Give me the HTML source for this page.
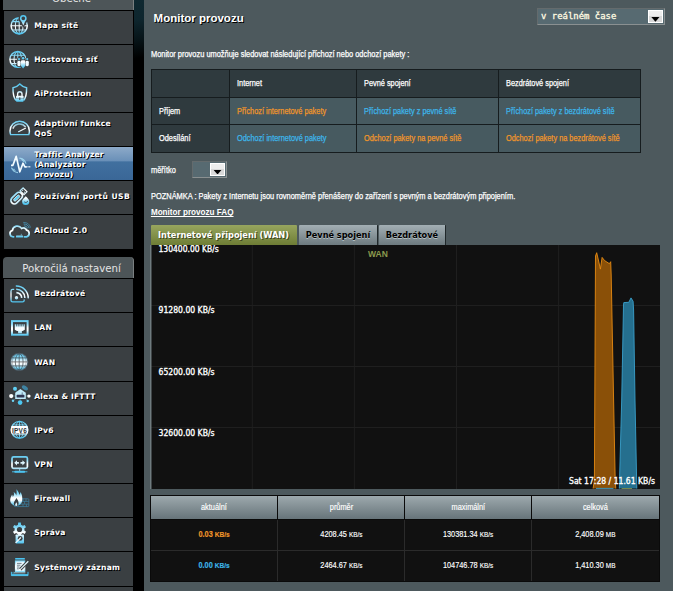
<!DOCTYPE html>
<html lang="cs">
<head>
<meta charset="utf-8">
<title>Monitor provozu</title>
<style>
html,body{margin:0;padding:0;}
body{width:673px;height:591px;overflow:hidden;background:#000;position:relative;font-family:"Liberation Sans",sans-serif;}
.abs{position:absolute;}
#gap{left:134px;top:0;width:10px;height:591px;background:linear-gradient(170deg,#0f2931 0,#0e262e 20px,#071418 40px,#000 58px);}
#main{left:144px;top:0;width:529px;height:591px;background:#4d595d;}
.mh{position:absolute;left:3px;width:131px;background:#4d5558;color:#e4e4e4;font-family:"DejaVu Sans",sans-serif;font-size:10.2px;text-align:center;box-sizing:border-box;border-right:1px solid #7a7f80;}
.mi{position:absolute;left:4px;width:129px;height:33.2px;background:#3a3f42;color:#fff;font-family:"DejaVu Sans",sans-serif;font-weight:bold;font-size:7.6px;letter-spacing:0.27px;line-height:10px;text-shadow:1px 1px 0 #000;}
.mi span{position:absolute;left:30.2px;white-space:nowrap;}
.mi.one span{top:9.9px;}
.mi.two span{top:6.05px;}
.mi.lo2 span{top:10.7px;}
.mi.lo span{top:10.2px;left:30.2px;}
.mi.three span{top:3.4px;}
.mi.sel{background:linear-gradient(#8daac9 0,#6a90b8 42%,#41709f 45%,#3a6797 100%);}
.mi svg text{text-shadow:none;}
.mi svg{position:absolute;left:0;top:0;width:34px;height:33px;overflow:visible;}
#title{left:153.6px;top:11px;color:#fff;font-weight:bold;font-size:11.5px;line-height:14px;text-shadow:1px 1px 0 #000;white-space:nowrap;}
.t8{color:#fff;font-size:8.5px;-webkit-text-stroke:0.25px;line-height:10px;white-space:nowrap;transform:scaleX(.875);transform-origin:0 50%;}
.cx{display:inline-block;font-size:8.5px;-webkit-text-stroke:0.25px;transform:scaleX(.865);transform-origin:0 50%;}
.cc{display:inline-block;font-size:8.5px;-webkit-text-stroke:0.15px;transform:scaleX(.865);transform-origin:50% 50%;}

#sel1{left:537.2px;top:8.3px;width:127.5px;height:16.4px;box-sizing:border-box;background:#576a71;border:1px solid;border-color:#646b6d #8a9091 #8a9091 #646b6d;}
#sel1 span{position:absolute;left:2.8px;top:1.5px;font-family:"DejaVu Sans Mono",monospace;font-size:8.95px;line-height:11px;color:#fffbe2;-webkit-text-stroke:0.3px;white-space:nowrap;}
.ddb{position:absolute;box-sizing:border-box;background:linear-gradient(#eeeeee 0,#ececec 45%,#d7d7d7 45%,#d9d9d9 100%);border:1px solid #fff;}
.ddb:after{content:"";position:absolute;left:50%;top:6.1px;margin-left:-4.1px;width:8.2px;height:4.6px;background:#000;clip-path:polygon(0 0,100% 0,50% 100%);}
#tbl{left:151px;top:69px;width:490px;height:84px;background:#161c1e;}
#tbl div{position:absolute;box-sizing:border-box;font-size:8px;line-height:10px;color:#fff;white-space:nowrap;padding-left:7.3px;}
#tbl .h{background:#2f3a3e;}
#tbl .d{background:#475a60;}
.or{color:#f0962a !important;}
.bl{color:#3db6ea !important;}
#sel2{left:192px;top:161px;width:35px;height:17px;box-sizing:border-box;background:#576a71;border:1px solid;border-color:#646b6d #8a9091 #8a9091 #646b6d;}
#faq{left:150.9px;top:207.6px;font-weight:bold;text-decoration:underline;font-size:8.15px;transform:none;-webkit-text-stroke:0;text-underline-offset:1.2px;text-decoration-skip-ink:none;text-decoration-thickness:0.9px;}
.tab{position:absolute;top:225px;height:20px;box-sizing:border-box;font-family:"DejaVu Sans",sans-serif;font-weight:bold;font-size:8.2px;line-height:20px;text-align:center;white-space:nowrap;}
#tab1{left:151px;width:146.1px;background:linear-gradient(#97a55e,#6e7d35);color:#fff;text-shadow:1px 1px 0 #3d4520;border-radius:1px 1px 0 0;font-size:8.22px;padding-right:1.2px;}
.tabg{background:linear-gradient(#a3afb4,#6d7a7f);color:#000;text-shadow:0 1px 0 #b5c0c4;border-right:1px solid #20282a;border-radius:1px 1px 0 0;}
#chart{left:150px;top:245px;width:510px;height:244px;}
#stat{left:150px;top:495px;width:510px;height:87px;background:#2b2b2b;box-shadow:inset 0 0 0 1px #0a0a0a;}
#stat .hb{left:0;top:0;width:510px;height:25px;background:#0a0a0a;}
#stat div{position:absolute;box-sizing:border-box;font-size:8px;text-align:center;color:#fff;white-space:nowrap;}
#stat .sh{background:linear-gradient(#9da9ad,#67747a);height:23px;line-height:23px;top:1px;}
#stat .sd{background:#111;height:30px;line-height:28.4px;}
#stat small{font-size:7.4px;}
#stat b small{font-size:7.6px;}
</style>
</head>
<body>
<svg width="0" height="0" style="position:absolute"><defs><linearGradient id="ig" gradientUnits="userSpaceOnUse" x1="0" y1="5" x2="0" y2="25"><stop offset="0" stop-color="#4fc6f1"/><stop offset="0.28" stop-color="#86d8f6"/><stop offset="0.5" stop-color="#ffffff"/><stop offset="0.62" stop-color="#f4fbfe"/><stop offset="0.85" stop-color="#58c8f1"/><stop offset="1" stop-color="#45beec"/></linearGradient><linearGradient id="ig2" gradientUnits="userSpaceOnUse" x1="0" y1="17" x2="0" y2="27"><stop offset="0" stop-color="#eaf8fe"/><stop offset="0.45" stop-color="#9fdff7"/><stop offset="1" stop-color="#45beec"/></linearGradient></defs></svg>
<div class="abs" id="gap"></div>
<div class="abs" id="main"></div>

<!-- sidebar -->
<div class="mh" style="top:-10px;height:20px;line-height:18.6px;padding-left:7px;">Obecné</div>
<div class="mi one" style="top:10.9px"><svg viewBox="0 0 34 33" width="34" height="33" style="top:0.1px"><g stroke="url(#ig)" fill="none" stroke-width="1.5"><circle cx="15.2" cy="14.8" r="8.1"/><ellipse cx="15.2" cy="14.8" rx="3.9" ry="8.1" stroke-width="1.05"/><path d="M15.2 6.7V22.9M7.1 14.8H23.3M8.3 10.6H22.1M8.3 19H22.1" stroke-width="1.05"/></g>
<path d="M19.3 14.6C18.2 12.4 15.6 10 15.6 7.4A3.7 3.7 0 0 1 23 7.4C23 10 20.4 12.4 19.3 14.6Z" fill="#3a3f42" stroke="#3a3f42" stroke-width="2.2"/>
<circle cx="19.3" cy="7.3" r="2.6" stroke="url(#ig)" fill="none" stroke-width="1.5"/>
<path d="M16.9 9.2L19.3 14.4L21.7 9.2C20.6 10.4 18 10.4 16.9 9.2Z" fill="url(#ig)" stroke="none"/></svg><span>Mapa sítě</span></div>
<div class="mi one" style="top:44.9px"><svg viewBox="0 0 34 33" width="34" height="33" style="top:0.1px"><g stroke="url(#ig)" fill="none" stroke-width="1.45"><circle cx="13.8" cy="14.3" r="7.9"/><ellipse cx="13.8" cy="14.3" rx="3.8" ry="7.9" stroke-width="1.05"/><path d="M13.8 6.4V22.2M5.9 14.3H21.7M7 10.2H20.6M7 18.4H20.6" stroke-width="1.05"/></g>
<g fill="#3a3f42" stroke="#3a3f42" stroke-width="1.8">
<circle cx="15" cy="14.2" r="1.1"/><rect x="13.4" y="15.8" width="3.2" height="5.4" rx="1.4"/>
<circle cx="23.2" cy="14.2" r="1.1"/><rect x="21.6" y="15.8" width="3.2" height="5.4" rx="1.4"/>
<circle cx="19.1" cy="13.4" r="1.3"/><path d="M16.9 16.7Q16.9 15.3 18.2 15.3H20Q21.3 15.3 21.3 16.7V20.8L19.1 23.4L16.9 20.8Z"/>
</g>
<g fill="#f2fbff">
<rect x="13.4" y="15.8" width="3.2" height="5.4" rx="1.4"/>
<rect x="21.6" y="15.8" width="3.2" height="5.4" rx="1.4"/>
<path d="M16.9 16.7Q16.9 15.3 18.2 15.3H20Q21.3 15.3 21.3 16.7V20.8L19.1 23.4L16.9 20.8Z" fill="url(#ig)"/>
</g>
<g fill="#62cdf3"><circle cx="15" cy="14.1" r="1.1"/><circle cx="23.2" cy="14.1" r="1.1"/><circle cx="19.1" cy="13.3" r="1.3"/></g></svg><span style="letter-spacing:0.35px">Hostovaná síť</span></div>
<div class="mi one" style="top:78.9px"><svg viewBox="0 0 34 33" width="34" height="33" style="top:0.1px"><path d="M12 21.4C9.4 18.6 8.9 14.6 9 8.8C11.8 8.5 13.9 7.1 15.8 5.1C17.7 7.1 19.8 8.5 22.6 8.8C22.7 14.6 22.2 18.6 19.6 21.4" stroke="url(#ig)" fill="none" stroke-width="1.45"/>
<path d="M13.6 17V15.1A2.2 2.4 0 0 1 18 15.1V17" stroke="url(#ig)" fill="none" stroke-width="1.35"/>
<rect x="12" y="16.8" width="7.6" height="6" rx="0.8" fill="url(#ig)" stroke="none"/>
<path d="M12 19.3H19.6" stroke="#3a3f42" stroke-width="0.5" opacity="0.7"/>
<rect x="15.3" y="18.4" width="1" height="2.6" fill="#3a3f42"/></svg><span style="letter-spacing:0.35px">AiProtection</span></div>
<div class="mi two" style="top:112.9px"><svg viewBox="0 0 34 33" width="34" height="33" style="top:0.1px"><path d="M6.6 21.6C6.2 20.4 6 19.2 6 17.9A9.7 9.7 0 0 1 25.4 17.9C25.4 19.2 25.2 20.4 24.8 21.6Z" stroke="url(#ig)" fill="none" stroke-width="1.45"/>
<path d="M8.9 15.6A7.3 7.3 0 0 1 21.6 14" stroke="url(#ig)" fill="none" stroke-width="1.5" opacity="0.85"/>
<path d="M14.6 18.7L21.4 15.2" stroke="url(#ig)" fill="none" stroke-width="1.2" stroke-linecap="round"/></svg><span>Adaptivní funkce<br>QoS</span></div>
<div class="mi three sel" style="top:146.9px"><svg viewBox="0 0 34 33" width="34" height="33" style="top:0.1px"><g stroke="#a9e2f8" fill="none" stroke-width="1.2" opacity="0.8"><path d="M15.4 11.2A8 8 0 0 1 22 16.6"/><path d="M14 25.6A8 8 0 0 1 7.4 20.6"/><path d="M17.2 12.4L20.2 15.2M18.6 11.8L19.4 14.4M8.4 21.6L11.6 23.8M9.6 24.2L10.2 21.8" stroke-width="0.9"/></g>
<path d="M7 18.3H8.9L12.2 9.4L15.8 24.8L19 16.2L20.9 19.8H22.8" stroke="#f2fbff" fill="none" stroke-width="1.7" stroke-linejoin="round"/>
<path d="M23.5 19.1H24.6V20.5H23.5ZM25.2 19.1H26.3V20.5H25.2Z" fill="#e6f1f8"/></svg><span style="letter-spacing:0.17px">Traffic Analyzer<br>(Analyzátor<br>provozu)</span></div>
<div class="mi one lo2" style="top:181.2px"><svg viewBox="0 0 34 33" width="34" height="33" style="top:-0.2px"><g transform="translate(-0.4 0.2) rotate(-45 15 15)">
<rect x="5.6" y="11.5" width="13.4" height="7" rx="3.4" stroke="url(#ig)" fill="none" stroke-width="1.7"/>
<rect x="8.6" y="13.7" width="7.4" height="2.6" rx="1.3" fill="#5fcdf3" stroke="#dff5fd" stroke-width="0.8"/>
<rect x="19.9" y="12.2" width="4.2" height="5.6" stroke="url(#ig)" fill="none" stroke-width="1.2"/>
<path d="M21.4 13.7H22.6M21.4 16.3H22.6" stroke="#d5f1fb" stroke-width="1"/>
</g>
<path d="M21.7 15.3C23.7 17.2 25.3 18.7 25.3 20.4A3.6 3.6 0 0 1 18.1 20.4C18.1 19.2 18.8 18.2 19.8 17.2Z" fill="url(#ig)" stroke="none"/>
<path d="M20.2 20.8A2.1 2.1 0 0 0 23.8 19.8" stroke="#3a3f42" stroke-width="0.8" fill="none"/></svg><span style="letter-spacing:0.45px">Používání portů USB</span></div>
<div class="mi one lo2" style="top:215.4px"><svg viewBox="0 0 34 33" width="34" height="33" style="top:-0.4px"><path d="M9.6 21.8H9.2A3.2 3.2 0 0 1 8.4 15.5A5 5 0 0 1 17.6 13.4A3.6 3.6 0 0 1 22.6 15.2A3.4 3.4 0 0 1 22.6 21.8H20.4" stroke="url(#ig)" fill="none" stroke-width="1.75" stroke-linecap="round"/>
<rect x="12" y="20.4" width="7" height="2.2" rx="0.5" fill="url(#ig)" stroke="none"/>
<path d="M17.3 18.8V20.4" stroke="#8fd8f4" stroke-width="0.6"/>
<g stroke="#4aa7d2" fill="none" stroke-width="0.9" opacity="0.9"><path d="M19.6 9A5.6 5.6 0 0 1 25.2 13.2"/><path d="M20.2 10.8A3.6 3.6 0 0 1 23.6 13.4"/><path d="M19.2 7.4A7.4 7.4 0 0 1 26.6 12.6" opacity="0.7"/></g></svg><span style="letter-spacing:0.4px">AiCloud 2.0</span></div>

<div class="mh" style="top:257px;height:21px;line-height:23.6px;border-radius:4px 4px 0 0;padding-left:7px;">Pokročilá nastavení</div>
<div class="mi one lo" style="top:279.1px"><svg viewBox="0 0 34 33" width="34" height="33" style="top:-0.1px"><path d="M10.2 10.4H8.6Q7 10.4 7 12V21.2Q7 22.8 8.6 22.8H18.6Q20.2 22.8 20.2 21.2V20.6" stroke="url(#ig)" fill="none" stroke-width="1.3"/>
<circle cx="12.5" cy="18.8" r="1.7" fill="url(#ig)" stroke="none"/>
<g stroke="url(#ig)" fill="none" stroke-linecap="butt"><path d="M12.4 13.6A5.3 5.3 0 0 1 17.7 18.9" stroke-width="1.6"/><path d="M12.2 10.3A8.6 8.6 0 0 1 20.9 18.9" stroke-width="1.6"/><path d="M11.8 7A11.9 11.9 0 0 1 24.2 19.4" stroke-width="1.5"/></g></svg><span>Bezdrátové</span></div>
<div class="mi one lo" style="top:313.27px"><svg viewBox="0 0 34 33" width="34" height="33" style="top:-0.27px"><rect x="8" y="8.1" width="15.6" height="13.6" stroke="url(#ig)" fill="none" stroke-width="2"/>
<path d="M10.8 11.2H20.8V16.8L18.6 18H17.9V20.2H14.1V18H13L10.8 16.8Z" fill="url(#ig)" stroke="none"/>
<path d="M12.6 11V13.4M14.3 11V13.4M16 11V13.4M17.7 11V13.4M19.3 11V13.4" stroke="#3a3f42" stroke-width="0.7"/></svg><span>LAN</span></div>
<div class="mi one lo" style="top:347.44px"><svg viewBox="0 0 34 33" width="34" height="33" style="top:-0.44px"><circle cx="15.2" cy="14.9" r="9.1" fill="#6b8fa6" opacity="0.5"/>
<circle cx="15.2" cy="14.9" r="8.1" fill="url(#ig)" stroke="none"/>
<g stroke="#3a3f42" fill="none" stroke-width="0.8" opacity="0.85"><ellipse cx="15.2" cy="14.9" rx="3.9" ry="8.1"/><path d="M15.2 6.8V23M7 14.9H23.4M8 10.9H22.4M8 18.9H22.4"/><ellipse cx="15.2" cy="14.9" rx="7" ry="8.1" opacity="0.45"/></g></svg><span>WAN</span></div>
<div class="mi one lo" style="top:381.61px"><svg viewBox="0 0 34 33" width="34" height="33" style="top:-0.61px"><g stroke="#7fd0ee" stroke-width="0.5" opacity="0.7"><path d="M7.4 15H25M16.2 18V21.6M11.8 9.2L13.6 11.4M9.6 19.4L11.4 18M23.4 19.6L21.8 18"/></g>
<path d="M11.2 18V11.8L16.4 8L21.8 11.8V18Z" fill="#bfe9f8"/>
<rect x="12.6" y="13.8" width="7.8" height="2.8" rx="0.6" fill="#2f3550"/>
<path d="M18.2 11.4V13.8" stroke="#2f3550" stroke-width="0.6"/>
<circle cx="7.2" cy="15.1" r="2.1" fill="#fff"/><circle cx="24.9" cy="15.1" r="1.7" fill="#fff"/>
<circle cx="11" cy="7.8" r="2" fill="#5fd0f5"/><circle cx="16.1" cy="21.6" r="2.3" fill="#4cc8f2"/>
<circle cx="9" cy="19.8" r="1.2" fill="#6fd4f4"/><circle cx="23.7" cy="20" r="1.2" fill="#6fd4f4"/>
<ellipse cx="20.9" cy="6.9" rx="3.4" ry="1.9" transform="rotate(35 20.9 6.9)" fill="#3f8fb4" opacity="0.85"/></svg><span style="letter-spacing:0.15px">Alexa &amp; IFTTT</span></div>
<div class="mi one lo" style="top:415.78px"><svg viewBox="0 0 34 33" width="34" height="33" style="top:-0.78px"><g stroke="url(#ig)" fill="none" stroke-width="1.3"><circle cx="15.5" cy="14.8" r="8.4"/><ellipse cx="15.5" cy="14.8" rx="4" ry="8.4" stroke-width="0.9"/><path d="M15.5 6.4V23.2M8.6 9.9H22.4M8.6 19.7H22.4" stroke-width="0.9"/></g>
<rect x="7.2" y="11" width="16.6" height="7.6" rx="1" fill="#fff"/>
<text x="15.5" y="17.5" text-anchor="middle" font-family="'Liberation Sans',sans-serif" font-weight="bold" font-size="7.4" fill="#2a2f33" textLength="15" lengthAdjust="spacingAndGlyphs">IPV6</text></svg><span>IPv6</span></div>
<div class="mi one lo" style="top:449.95px"><svg viewBox="0 0 34 33" width="34" height="33" style="top:-0.95px"><rect x="8" y="7.9" width="15.4" height="11.4" rx="1.6" stroke="url(#ig)" fill="none" stroke-width="1.7"/>
<path d="M10.2 13.8L13 11.2V12.9H14.9V14.7H13V16.4ZM21.2 13.8L18.4 11.2V12.9H16.5V14.7H18.4V16.4Z" fill="#dcf3fc"/>
<path d="M15.7 20V22.4" stroke="#9ddcf5" stroke-width="0.9"/>
<path d="M8 22.8H23.4" stroke="#4cc3f0" stroke-width="0.9"/><path d="M11.2 22.8H20.2" stroke="#4cc3f0" stroke-width="1.9" stroke-linecap="round"/></svg><span>VPN</span></div>
<div class="mi one lo" style="top:484.12px"><svg viewBox="0 0 34 33" width="34" height="33" style="top:-1.12px"><g stroke="#3b83a6" fill="none" stroke-width="0.85" opacity="0.85"><rect x="10.4" y="15.8" width="14.4" height="7.8" rx="0.6"/><path d="M10.4 18.4H24.8M10.4 21.1H24.8M19 15.6V18.4M22 15.6V18.4M17 18.4V21.1M20.6 18.4V21.1M19 21.1V23.8M22.4 21.1V23.8"/></g>
<path d="M12.4 6.2C14.2 8.4 15.4 10.2 15.4 12C16 11 16.4 10.2 16.4 9C18 11 18.6 14.4 18.2 17.6C17.6 21 15.4 23 12 23C8.4 22.6 6 20 6.2 16.6C6.4 14.4 7.4 13.4 8 11.6C8.6 12.6 8.8 13.2 8.8 14C10 12.4 10.4 10.6 9.6 9C11.2 9.8 12 11 12.2 12.6C12.8 10.6 12.8 8.4 12.4 6.2Z" fill="url(#ig)" stroke="none"/>
<path d="M12.3 15C13.6 16.8 14.8 18.2 14.6 20.4C14.4 22.2 13.4 23.2 12.2 23.2C10.8 23.2 9.8 22 9.8 20.4C9.8 18.6 11.6 17.2 12.3 15Z" fill="#3a3f42"/>
<path d="M12.3 19.2C13 20.2 13.4 21 13.2 22C13 22.8 12.6 23.1 12.2 23.1C11.6 23.1 11.2 22.6 11.2 21.8C11.2 20.8 12 20.2 12.3 19.2Z" fill="#dff4fc"/></svg><span>Firewall</span></div>
<div class="mi one lo" style="top:518.29px"><svg viewBox="0 0 34 33" width="34" height="33" style="top:-1.29px"><rect x="11.6" y="17.4" width="8.4" height="9.2" rx="0.8" fill="url(#ig2)"/>
<path d="M13.95 7.64L14.21 5.62L16.79 5.62L17.05 7.64L18.85 8.68L20.72 7.89L22.02 10.13L20.39 11.36L20.39 13.44L22.02 14.67L20.72 16.91L18.85 16.12L17.05 17.16L16.79 19.18L14.21 19.18L13.95 17.16L12.15 16.12L10.28 16.91L8.98 14.67L10.61 13.44L10.61 11.36L8.98 10.13L10.28 7.89L12.15 8.68Z" fill="url(#ig)" stroke="none" stroke="url(#ig)" stroke-width="0.9" stroke-linejoin="round"/>
<circle cx="15.5" cy="12.5" r="2.6" fill="#3a3f42"/>
<circle cx="16.2" cy="21.4" r="2.4" fill="#3a3f42"/>
<path d="M11.6 25.8L17.4 20" stroke="#f4fbfe" stroke-width="1.2"/>
<path d="M16.4 19.6L18 21.2" stroke="#3a3f42" stroke-width="1"/></svg><span>Správa</span></div>
<div class="mi one lo" style="top:552.46px"><svg viewBox="0 0 34 33" width="34" height="33" style="top:-1.46px"><path d="M11.2 7.8H20.8" stroke="#4cc3f0" stroke-width="1.6"/>
<rect x="11.5" y="10" width="9.2" height="10.4" fill="#eaf7fd" stroke="url(#ig)" stroke-width="1.2"/>
<path d="M13 12.4H17.6M13 14.2H16.4M13 16H15.4M13 17.8H14.8" stroke="#6b7780" stroke-width="0.9"/>
<path d="M24.4 10.1L16.2 18.3" stroke="#3a3f42" stroke-width="3.2"/>
<path d="M24.3 10.3L17 17.6" stroke="#e4f5fc" stroke-width="1.3"/>
<path d="M17 17.6L15.4 19.2" stroke="#fff" stroke-width="1.1"/>
<path d="M7.4 20.8V24.6H24V20.8" stroke="#4cc3f0" stroke-width="1" fill="none"/>
<path d="M7.4 23.9H24" stroke="#4cc3f0" stroke-width="1.6"/>
<path d="M10 21.8H21.4" stroke="#bfe8f8" stroke-width="0.8"/>
<circle cx="9.3" cy="22" r="0.8" fill="none" stroke="#4cc3f0" stroke-width="0.5"/></svg><span>Systémový záznam</span></div>
<div class="mi one" style="top:586.63px"></div>


<!-- main -->
<div class="abs" id="title">Monitor provozu</div>

<div class="abs" id="sel1"><span>v reálném čase</span><div class="ddb" style="left:109.6px;top:0.7px;width:15.3px;height:13.3px"></div></div>
<div class="abs t8" style="left:150.8px;top:49px">Monitor provozu umožňuje sledovat následující příchozí nebo odchozí pakety :</div>
<div class="abs" id="tbl">
 <div class="h" style="left:1px;top:1px;width:77px;height:27px;line-height:27px"></div>
 <div class="h" style="left:79px;top:1px;width:126px;height:27px;line-height:27px"><span class="cx">Internet</span></div>
 <div class="h" style="left:206px;top:1px;width:141px;height:27px;line-height:27px"><span class="cx">Pevné spojení</span></div>
 <div class="h" style="left:348px;top:1px;width:141px;height:27px;line-height:27px"><span class="cx">Bezdrátové spojení</span></div>
 <div class="h" style="left:1px;top:29px;width:77px;height:26px;line-height:26px"><span class="cx">Příjem</span></div>
 <div class="d or" style="left:79px;top:29px;width:126px;height:26px;line-height:26px"><span class="cx">Příchozí internetové pakety</span></div>
 <div class="d bl" style="left:206px;top:29px;width:141px;height:26px;line-height:26px"><span class="cx">Příchozí pakety z pevné sítě</span></div>
 <div class="d bl" style="left:348px;top:29px;width:141px;height:26px;line-height:26px"><span class="cx">Příchozí pakety z bezdrátové sítě</span></div>
 <div class="h" style="left:1px;top:56px;width:77px;height:27px;line-height:27px"><span class="cx">Odesílání</span></div>
 <div class="d bl" style="left:79px;top:56px;width:126px;height:27px;line-height:27px"><span class="cx">Odchozí internetové pakety</span></div>
 <div class="d or" style="left:206px;top:56px;width:141px;height:27px;line-height:27px"><span class="cx">Odchozí pakety na pevné sítě</span></div>
 <div class="d or" style="left:348px;top:56px;width:141px;height:27px;line-height:27px"><span class="cx">Odchozí pakety na bezdrátové sítě</span></div>
</div>
<div class="abs t8" style="left:150.6px;top:165px">měřítko</div>
<div class="abs" id="sel2"><div class="ddb" style="left:16.8px;top:0.7px;width:15.5px;height:13.6px"></div></div>
<div class="abs t8" style="left:150.8px;top:191px">POZNÁMKA : Pakety z Internetu jsou rovnoměrně přenášeny do zařízení s pevným a bezdrátovým připojením.</div>
<div class="abs t8" id="faq">Monitor provozu FAQ</div>
<div class="tab" id="tab1">Internetové připojení (WAN)</div>
<div class="tab tabg" style="left:299px;width:79px">Pevné spojení</div>
<div class="tab tabg" style="left:379.2px;width:66.4px">Bezdrátové</div>
<svg class="abs" id="chart" viewBox="0 0 510 244">
 <rect x="0" y="0" width="510" height="244" fill="#111"/>
 <g stroke="#1f1f1f" stroke-width="1">
  <path d="M102.3 0V244M204.4 0V244M306.5 0V244M408.6 0V244"/>
  <path d="M0 60.5H510M0 121.5H510M0 182.5H510"/>
 </g>
 <rect x="0" y="0" width="1.5" height="244" fill="#6f7b7f"/>
 <polygon points="443.1,243.5 444.4,235.0 445.5,11.0 446.7,7.7 448.6,16.0 450.4,24.1 452.1,12.4 454.5,15.5 456.8,17.0 459.4,18.7 460.7,16.7 461.2,30.0 463.6,155.0 465.2,235.0 465.8,243.5" fill="#8a5008"/>
 <polyline points="443.1,243.5 444.4,235.0 445.5,11.0 446.7,7.7 448.6,16.0 450.4,24.1 452.1,12.4 454.5,15.5 456.8,17.0 459.4,18.7 460.7,16.7 461.2,30.0 463.6,155.0 465.2,235.0 465.8,243.5" fill="none" stroke="#e58a12" stroke-width="0.9" stroke-linejoin="round"/>
 <polygon points="469.3,243.5 471.7,155.0 473.5,60.0 473.8,57.6 478.8,57.3 481.0,52.9 483.1,56.3 483.6,65.0 485.0,155.0 486.8,243.5" fill="#256f8e"/>
 <polyline points="469.3,243.5 471.7,155.0 473.5,60.0 473.8,57.6 478.8,57.3 481.0,52.9 483.1,56.3 483.6,65.0 485.0,155.0 486.8,243.5" fill="none" stroke="#3aa0cc" stroke-width="0.9" stroke-linejoin="round"/>
 <path d="M446 243.4H463.4" stroke="#3aa0cc" stroke-width="0.9"/>
 <path d="M471.6 243.5H482" stroke="#8b9a4e" stroke-width="0.8"/>
 <g font-family="'DejaVu Sans Condensed','DejaVu Sans',sans-serif" font-size="8" fill="#fff" stroke="#fff" stroke-width="0.3">
  <text x="8.5" y="7.2" textLength="60.3" lengthAdjust="spacingAndGlyphs">130400.00 KB/s</text>
  <text x="8.5" y="68.2" textLength="56" lengthAdjust="spacingAndGlyphs">91280.00 KB/s</text>
  <text x="8.5" y="129.5" textLength="56" lengthAdjust="spacingAndGlyphs">65200.00 KB/s</text>
  <text x="8.5" y="190.5" textLength="56" lengthAdjust="spacingAndGlyphs">32600.00 KB/s</text>
  <text x="419" y="238.8" textLength="86" lengthAdjust="spacingAndGlyphs">Sat 17:28 / 11.61 KB/s</text>
 </g>
 <text x="218" y="12" font-family="'Liberation Sans',sans-serif" font-weight="bold" font-size="8.5" fill="#8b9a4e">WAN</text>
</svg>
<div class="abs" id="stat">
 <div class="hb"></div>
 <div class="sh" style="left:1px;width:126px"><span class="cc">aktuální</span></div>
 <div class="sh" style="left:128px;width:126px"><span class="cc">průměr</span></div>
 <div class="sh" style="left:255px;width:126px"><span class="cc">maximální</span></div>
 <div class="sh" style="left:382px;width:127.4px"><span class="cc">celková</span></div>
 <div class="sd or" style="left:1px;top:25px;width:126px"><span class="cc"><b>0.03 <small>KB/s</small></b></span></div>
 <div class="sd" style="left:128px;top:25px;width:126px"><span class="cc">4208.45 <small>KB/s</small></span></div>
 <div class="sd" style="left:255px;top:25px;width:126px"><span class="cc">130381.34 <small>KB/s</small></span></div>
 <div class="sd" style="left:382px;top:25px;width:127.4px"><span class="cc">2,408.09 <small>MB</small></span></div>
 <div class="sd bl" style="left:1px;top:56px;width:126px"><span class="cc"><b>0.00 <small>KB/s</small></b></span></div>
 <div class="sd" style="left:128px;top:56px;width:126px"><span class="cc">2464.67 <small>KB/s</small></span></div>
 <div class="sd" style="left:255px;top:56px;width:126px"><span class="cc">104746.78 <small>KB/s</small></span></div>
 <div class="sd" style="left:382px;top:56px;width:127.4px"><span class="cc">1,410.30 <small>MB</small></span></div>
</div>

</body>
</html>
